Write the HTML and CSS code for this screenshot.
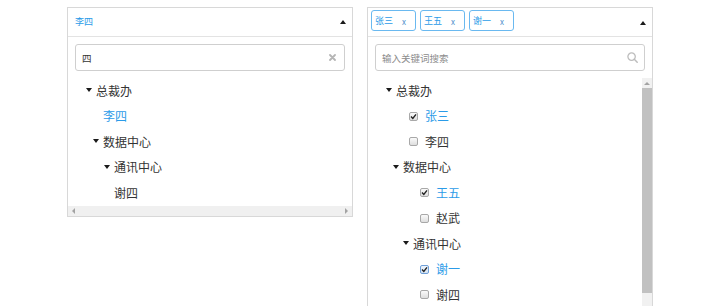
FILE: index.html
```html
<!DOCTYPE html>
<html lang="zh">
<head>
<meta charset="utf-8">
<title>Tree Select</title>
<link rel="stylesheet" href="styles.css">
</head>
<body>
<div class="page">
  <div class="select select-left">
    <div class="head">
      <span class="head-value">李四</span>
      <span class="caret-up"></span>
    </div>
    <div class="search-wrap">
      <div class="search">
        <span class="search-text">四</span>
        <svg class="icon-clear" width="7" height="7" viewBox="0 0 7 7"><path d="M1 1L6 6M6 1L1 6" stroke="#b5b5b5" stroke-width="1.8" stroke-linecap="round"/></svg>
      </div>
    </div>
    <div class="tree">
      <div class="row l-18"><span class="tri"></span><span class="label">总裁办</span></div>
      <div class="row l-35"><span class="label active">李四</span></div>
      <div class="row l-25"><span class="tri"></span><span class="label">数据中心</span></div>
      <div class="row l-36"><span class="tri"></span><span class="label">通讯中心</span></div>
      <div class="row l-46"><span class="label">谢四</span></div>
    </div>
    <div class="hscroll"><span class="arr-left"></span><span class="arr-right"></span></div>
  </div>

  <div class="select select-right">
    <div class="head head-tags">
      <div class="tags">
        <span class="tag">张三<span class="tag-x">x</span></span>
        <span class="tag">王五<span class="tag-x">x</span></span>
        <span class="tag">谢一<span class="tag-x">x</span></span>
      </div>
      <span class="caret-up"></span>
    </div>
    <div class="search-wrap">
      <div class="search">
        <span class="search-text placeholder">输入关键词搜索</span>
        <svg class="icon-search" width="11" height="11" viewBox="0 0 11 11"><circle cx="4.6" cy="4.6" r="3.7" fill="none" stroke="#bdbdbd" stroke-width="1.3"/><path d="M7.3 7.3L10.2 10.2" stroke="#bdbdbd" stroke-width="1.5" stroke-linecap="round"/></svg>
      </div>
    </div>
    <div class="tree-box">
      <div class="tree">
        <div class="row l-18"><span class="tri"></span><span class="label">总裁办</span></div>
        <div class="row l-41"><span class="cb checked"><svg width="7" height="7" viewBox="0 0 7 7"><path d="M1 3.6L2.8 5.4L6 1.4" fill="none" stroke="#222" stroke-width="1.4"/></svg></span><span class="label active">张三</span></div>
        <div class="row l-41"><span class="cb"></span><span class="label">李四</span></div>
        <div class="row l-25"><span class="tri"></span><span class="label">数据中心</span></div>
        <div class="row l-52"><span class="cb checked"><svg width="7" height="7" viewBox="0 0 7 7"><path d="M1 3.6L2.8 5.4L6 1.4" fill="none" stroke="#222" stroke-width="1.4"/></svg></span><span class="label active">王五</span></div>
        <div class="row l-52"><span class="cb"></span><span class="label">赵武</span></div>
        <div class="row l-35"><span class="tri"></span><span class="label">通讯中心</span></div>
        <div class="row l-52"><span class="cb checked focus"><svg width="7" height="7" viewBox="0 0 7 7"><path d="M1 3.6L2.8 5.4L6 1.4" fill="none" stroke="#222" stroke-width="1.4"/></svg></span><span class="label active">谢一</span></div>
        <div class="row l-52"><span class="cb"></span><span class="label">谢四</span></div>
      </div>
      <div class="vscroll">
        <div class="vbtn"><span class="arr-up"></span></div>
        <div class="vthumb"></div>
      </div>
    </div>
  </div>
</div>
</body>
</html>
```

FILE: styles.css
```css
* { box-sizing: border-box; }

html, body {
  margin: 0;
  background: #fff;
}

body {
  font-family: "Noto Sans CJK SC", "Noto Sans", sans-serif;
  color: #333;
  overflow: hidden;
}

.page {
  display: flex;
  align-items: flex-start;
  gap: 14px;
  padding: 7px 0 0 67px;
}

.select {
  width: 286px;
  border: 1px solid #d8d8d8;
  background: #fff;
  display: flex;
  flex-direction: column;
}

.select-right {
  height: 320px;
}

.head {
  height: 29px;
  flex: none;
  border-bottom: 1px solid #e3e3e3;
  display: flex;
  align-items: center;
  padding: 0 6px 0 7px;
}

.head-value {
  flex: 1;
  font-size: 9px;
  line-height: 12px;
  color: #2b9be8;
}

.caret-up {
  width: 0;
  height: 0;
  border-left: 3px solid transparent;
  border-right: 3px solid transparent;
  border-bottom: 4px solid #1a1a1a;
}

.head-tags {
  align-items: flex-start;
  padding: 2px 6px 0 3px;
}

.head-tags .caret-up {
  align-self: center;
  margin-top: -1px;
}

.tags {
  flex: 1;
  display: flex;
  gap: 4px;
}

.tag {
  width: 45px;
  height: 21px;
  border: 1px solid #6ab9f0;
  border-radius: 3px;
  display: flex;
  align-items: center;
  padding-left: 3px;
  font-size: 9px;
  color: #2b9be8;
}

.tag-x {
  margin-left: 9px;
  font-size: 8px;
  line-height: 8px;
  margin-top: 3px;
  color: #4f8fcc;
}

.search-wrap {
  flex: none;
  padding: 7px 7px 7px;
}

.search {
  height: 27px;
  border: 1px solid #cfcfcf;
  border-radius: 3px;
  display: flex;
  align-items: center;
  padding: 0 8px 0 6px;
}

.search-text {
  flex: 1;
  font-size: 9.5px;
  color: #333;
}

.search-text.placeholder {
  color: #8c8c8c;
}

.icon-search {
  margin-right: -2px;
}

.tree {
  display: flex;
  flex-direction: column;
}

.tree-box {
  display: flex;
  flex: 1;
  min-height: 0;
}

.tree-box .tree {
  flex: 1;
}

.row {
  height: 25.5px;
  display: flex;
  align-items: center;
  font-size: 12px;
  white-space: nowrap;
}

.l-18 { padding-left: 18px; }
.l-25 { padding-left: 25px; }
.l-35 { padding-left: 35px; }
.l-36 { padding-left: 36px; }
.l-41 { padding-left: 41px; }
.l-46 { padding-left: 46px; }
.l-52 { padding-left: 52px; }

.tri {
  width: 0;
  height: 0;
  border-left: 3px solid transparent;
  border-right: 3px solid transparent;
  border-top: 4px solid #1a1a1a;
  margin-right: 4px;
  margin-top: -1px;
}

.label {
  line-height: 14px;
}

.label.active {
  color: #2b9be8;
}

.cb {
  width: 9px;
  height: 9px;
  border: 1px solid #a8a8a8;
  border-radius: 2px;
  background: linear-gradient(#fafafa, #dedede);
  margin-right: 7px;
  display: flex;
  align-items: center;
  justify-content: center;
}

.cb svg {
  display: block;
}

.cb.focus {
  border-color: #6f9fd8;
  background: linear-gradient(#eef5fc, #d5e3f3);
}

.hscroll {
  height: 10px;
  flex: none;
  background: #f0f0f0;
  display: flex;
  align-items: center;
  justify-content: space-between;
  padding: 0 4px;
}

.arr-left {
  width: 0;
  height: 0;
  border-top: 3px solid transparent;
  border-bottom: 3px solid transparent;
  border-right: 3px solid #a3a3a3;
}

.arr-right {
  width: 0;
  height: 0;
  border-top: 3px solid transparent;
  border-bottom: 3px solid transparent;
  border-left: 3px solid #a3a3a3;
}

.vscroll {
  width: 10px;
  flex: none;
  background: #f1f1f1;
  display: flex;
  flex-direction: column;
}

.vbtn {
  height: 10px;
  display: flex;
  align-items: center;
  justify-content: center;
}

.arr-up {
  width: 0;
  height: 0;
  border-left: 3px solid transparent;
  border-right: 3px solid transparent;
  border-bottom: 3px solid #a3a3a3;
}

.vthumb {
  height: 205px;
  background: #c1c1c1;
}
```
